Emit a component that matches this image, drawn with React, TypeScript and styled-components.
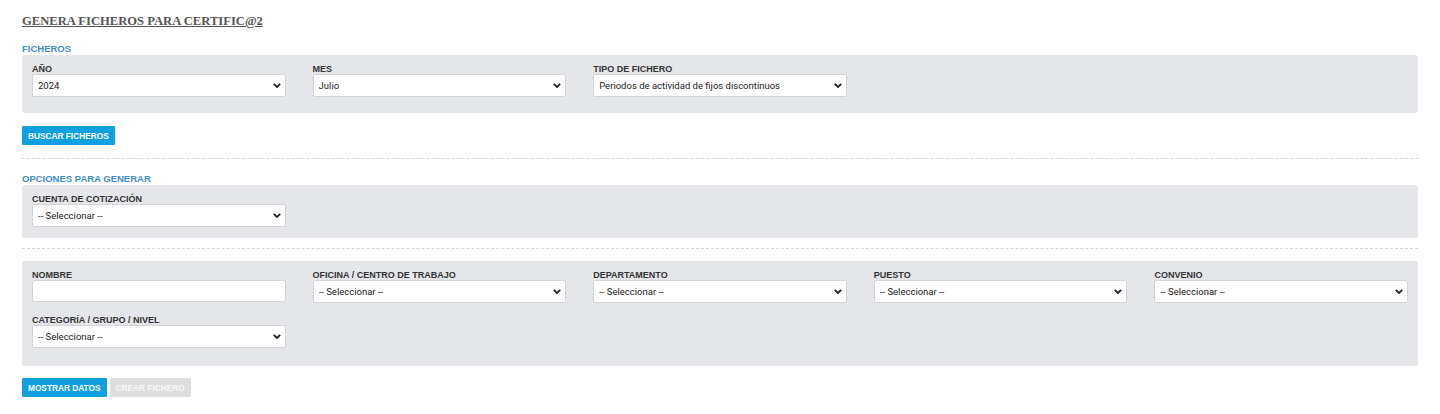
import React from "react";
import styled, { createGlobalStyle } from "styled-components";

const Global = createGlobalStyle`
  html, body { margin: 0; padding: 0; background: #fff; }
  body { font-family: "Liberation Sans", Arial, sans-serif; color: #333; }
  * { box-sizing: border-box; }
`;

const Page = styled.div`
  padding: 13px 22px 0 22px;
  width: 1440px;
`;

const Title = styled.h1`
  margin: 0 0 14px 0;
  font-family: "Liberation Serif", "Times New Roman", serif;
  font-weight: bold;
  font-size: 12.6px;
  line-height: 16px;
  color: #555;
  text-decoration: underline;
`;

const SectionTitle = styled.div`
  font-family: "Liberation Sans", Arial, sans-serif;
  font-size: 9.5px;
  font-weight: bold;
  line-height: 11px;
  color: #3f8bcf;
  margin-bottom: 1px;
`;

const Panel = styled.div<{ $pb: number }>`
  background: #e5e6ea;
  border-radius: 3px;
  padding: 9px 10px ${(p) => p.$pb}px 10px;
  display: grid;
  grid-template-columns: repeat(5, 1fr);
  column-gap: 27px;
  row-gap: 12px;
`;

const Field = styled.div`
  display: flex;
  flex-direction: column;
`;

const Label = styled.label`
  font-family: "Liberation Sans", Arial, sans-serif;
  font-size: 9px;
  font-weight: bold;
  line-height: 10px;
  color: #333;
  text-transform: uppercase;
`;

const chevron =
  "url(\"data:image/svg+xml;utf8,<svg xmlns='http://www.w3.org/2000/svg' width='8' height='5' viewBox='0 0 8 5'><path d='M0.8 0.8 L4 4 L7.2 0.8' fill='none' stroke='%23222' stroke-width='1.8'/></svg>\")";

const Select = styled.select`
  appearance: none;
  -webkit-appearance: none;
  height: 23px;
  width: 100%;
  border: 1px solid #d2d4d8;
  border-radius: 2px;
  background: #fff ${chevron} no-repeat right 4px center;
  font-family: Roboto, "Liberation Sans", Arial, sans-serif;
  font-size: 9.5px;
  color: #222;
  padding: 0 16px 0 5px;
  margin: 0;
`;

const Input = styled.input`
  height: 22px;
  width: 100%;
  border: 1px solid #d2d4d8;
  border-radius: 2px;
  background: #fff;
  font-size: 10px;
  padding: 0 6px;
  margin: 0;
`;

const ButtonRow = styled.div<{ $mt: number }>`
  display: flex;
  gap: 3px;
  margin-top: ${(p) => p.$mt}px;
`;

const Button = styled.button<{ $disabled?: boolean }>`
  height: 19px;
  padding: 0 6px;
  border: none;
  border-radius: 1px;
  font-family: "Liberation Sans", Arial, sans-serif;
  font-size: 8.3px;
  font-weight: bold;
  color: ${(p) => (p.$disabled ? "#f6f6f6" : "#fff")};
  background: ${(p) => (p.$disabled ? "#dedede" : "#0ea0df")};
  cursor: ${(p) => (p.$disabled ? "default" : "pointer")};
`;

const Divider = styled.hr<{ $mt: number; $mb: number }>`
  border: none;
  border-top: 1px dashed #d6d6d6;
  margin: ${(p) => p.$mt}px 0 ${(p) => p.$mb}px 0;
`;

const SEL = "-- Seleccionar --";

function SelectField({ label, value }: { label: string; value: string }) {
  return (
    <Field>
      <Label>{label}</Label>
      <Select defaultValue={value}>
        <option>{value}</option>
      </Select>
    </Field>
  );
}

export default function App() {
  return (
    <>
      <Global />
      <Page>
        <Title>GENERA FICHEROS PARA CERTIFIC@2</Title>
        <SectionTitle>FICHEROS</SectionTitle>
        <Panel $pb={16}>
          <SelectField label="Año" value="2024" />
          <SelectField label="Mes" value="Julio" />
          <SelectField label="Tipo de fichero" value="Periodos de actividad de fijos discontinuos" />
        </Panel>
        <ButtonRow $mt={13}>
          <Button>BUSCAR FICHEROS</Button>
        </ButtonRow>
        <Divider $mt={13} $mb={14} />
        <SectionTitle>OPCIONES PARA GENERAR</SectionTitle>
        <Panel $pb={11}>
          <SelectField label="Cuenta de cotización" value={SEL} />
        </Panel>
        <Divider $mt={10} $mb={12} />
        <Panel $pb={18}>
          <Field>
            <Label>Nombre</Label>
            <Input type="text" />
          </Field>
          <SelectField label="Oficina / Centro de trabajo" value={SEL} />
          <SelectField label="Departamento" value={SEL} />
          <SelectField label="Puesto" value={SEL} />
          <SelectField label="Convenio" value={SEL} />
          <SelectField label="Categoría / Grupo / Nivel" value={SEL} />
        </Panel>
        <ButtonRow $mt={12}>
          <Button>MOSTRAR DATOS</Button>
          <Button $disabled disabled>CREAR FICHERO</Button>
        </ButtonRow>
      </Page>
    </>
  );
}
